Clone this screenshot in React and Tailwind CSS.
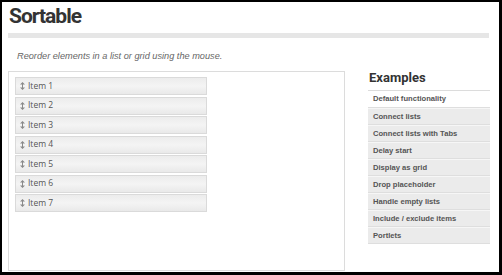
const ITEMS = ['Item 1', 'Item 2', 'Item 3', 'Item 4', 'Item 5', 'Item 6', 'Item 7']

const EXAMPLES = [
  'Default functionality',
  'Connect lists',
  'Connect lists with Tabs',
  'Delay start',
  'Display as grid',
  'Drop placeholder',
  'Handle empty lists',
  'Include / exclude items',
  'Portlets',
]

function DragIcon() {
  return (
    <svg width="5" height="8" viewBox="0 0 5 8" className="shrink-0">
      <path d="M2.5 0 L5 2.5 H3 V5.5 H5 L2.5 8 L0 5.5 H2 V2.5 H0 Z" fill="#8a8a8a" />
    </svg>
  )
}

export default function App() {
  return (
    <div className="w-[502px] h-[275px] bg-white border-t-2 border-l-2 border-r-[3px] border-b-[3px] border-black overflow-hidden font-['Liberation_Sans',Arial,sans-serif]">
      <h1 className="ml-[7px] mt-[1px] h-[26px] leading-[26px] text-[21px] font-bold text-[#333] tracking-[-1px] font-['Roboto',sans-serif]">
        Sortable
      </h1>
      <div className="ml-[6px] mt-[4px] w-[481px] h-[5px] bg-[#e6e6e6]" />
      <p className="ml-[15px] mt-[13px] text-[9.2px] leading-[11px] italic text-[#666]">
        Reorder elements in a list or grid using the mouse.
      </p>

      <div className="flex mt-[9px] ml-[6px]">
        <div className="w-[337px] h-[200px] border border-[#dcdcdc] pt-[5px] pl-[6px] flex flex-col gap-[1.5px]">
          {ITEMS.map(item => (
            <div
              key={item}
              className="w-[192px] h-[18px] shrink-0 border border-[#dadada] bg-gradient-to-b from-[#ececec] via-[#f4f4f4] to-[#e9e9e9] flex items-center gap-[3px] pl-[4px]"
            >
              <DragIcon />
              <span className="text-[8.5px] text-[#555] font-['Open_Sans',sans-serif]">{item}</span>
            </div>
          ))}
        </div>

        <div className="ml-[23px] w-[122px]">
          <h2 className="pl-[1px] h-[19px] leading-[14px] text-[13px] font-bold text-[#333] font-['Roboto',sans-serif]">
            Examples
          </h2>
          <div className="border-t border-[#dcdcdc]">
            {EXAMPLES.map((ex, i) => (
              <div
                key={ex}
                className={
                  'h-[17px] flex items-center pl-[5px] text-[7.6px] font-bold text-[#555] border-b border-[#dedede] ' +
                  (i === 0 ? 'bg-white' : 'bg-[#ebebeb] border-t border-t-[#f6f6f6]')
                }
              >
                {ex}
              </div>
            ))}
          </div>
        </div>
      </div>
    </div>
  )
}
